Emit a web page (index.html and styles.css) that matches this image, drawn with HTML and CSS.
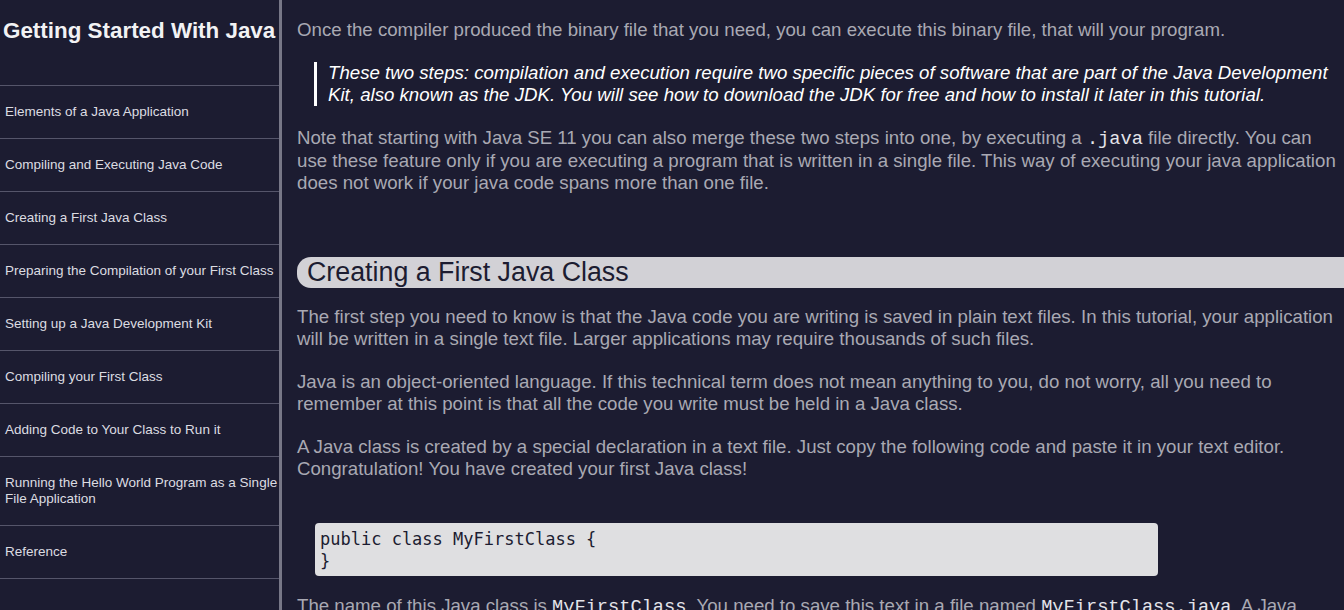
FILE: index.html
```html
<!DOCTYPE html>
<html lang="en">
<head>
<meta charset="utf-8">
<title>Getting Started With Java</title>
<link rel="stylesheet" href="styles.css">
</head>
<body>
<div class="layout">
  <aside class="sidebar">
    <div class="sidebar-title">Getting Started With Java</div>
    <nav class="toc">
      <a class="toc-item" href="#">Elements of a Java Application</a>
      <a class="toc-item" href="#">Compiling and Executing Java Code</a>
      <a class="toc-item" href="#">Creating a First Java Class</a>
      <a class="toc-item" href="#">Preparing the Compilation of your First Class</a>
      <a class="toc-item" href="#">Setting up a Java Development Kit</a>
      <a class="toc-item" href="#">Compiling your First Class</a>
      <a class="toc-item" href="#">Adding Code to Your Class to Run it</a>
      <a class="toc-item" href="#">Running the Hello World Program as a Single File Application</a>
      <a class="toc-item" href="#">Reference</a>
    </nav>
  </aside>
  <main class="content">
    <p class="text">Once the compiler produced the binary file that you need, you can execute this binary file, that will your program.</p>
    <blockquote class="quote">These two steps: compilation and execution require two specific pieces of software that are part of the Java Development Kit, also known as the JDK. You will see how to download the JDK for free and how to install it later in this tutorial.</blockquote>
    <p class="text">Note that starting with Java SE 11 you can also merge these two steps into one, by executing a <code class="inline-code">.java</code> file directly. You can use these feature only if you are executing a program that is written in a single file. This way of executing your java application does not work if your java code spans more than one file.</p>

    <h2 class="section-title">Creating a First Java Class</h2>
    <p class="text">The first step you need to know is that the Java code you are writing is saved in plain text files. In this tutorial, your application will be written in a single text file. Larger applications may require thousands of such files.</p>
    <p class="text">Java is an object-oriented language. If this technical term does not mean anything to you, do not worry, all you need to remember at this point is that all the code you write must be held in a Java class.</p>
    <p class="text">A Java class is created by a special declaration in a text file. Just copy the following code and paste it in your text editor. Congratulation! You have created your first Java class!</p>
    <pre class="code-block">public class MyFirstClass {
}</pre>
    <p class="text">The name of this Java class is <code class="inline-code">MyFirstClass</code>. You need to save this text in a file named <code class="inline-code">MyFirstClass.java</code>. A Java class must be saved in a file that has the same name as your class, with the extension .java.</p>
  </main>
</div>
</body>
</html>
```

FILE: styles.css
```css
html, body {
  margin: 0;
  padding: 0;
  height: 100%;
  overflow: hidden;
}

body {
  background: #1c1c31;
  font-family: "Liberation Sans", Arial, sans-serif;
}

.layout {
  display: flex;
  align-items: stretch;
  min-height: 100%;
}

.sidebar {
  flex: 0 0 279px;
  width: 279px;
  border-right: 3px solid #777787;
  display: flex;
  flex-direction: column;
}

.sidebar-title {
  box-sizing: border-box;
  height: 85px;
  padding: 18px 0 0 3px;
  font-size: 22.4px;
  font-weight: bold;
  color: #f2f2f4;
  white-space: nowrap;
}

.toc {
  display: flex;
  flex-direction: column;
}

.toc-item {
  display: block;
  border-top: 1px solid #55556a;
  padding: 18px 0 18px 5px;
  font-size: 13.5px;
  line-height: 16px;
  color: #dcdce2;
  text-decoration: none;
}

.toc-item:last-child {
  border-bottom: 1px solid #55556a;
}

.content {
  flex: 1 1 auto;
  min-width: 0;
  padding: 19px 0 0 15px;
}

.text {
  margin: 0 0 21px 0;
  font-size: 18.67px;
  line-height: 22px;
  color: #a9a9b3;
}

.inline-code {
  font-family: "Liberation Mono", "Courier New", monospace;
  font-size: 18.67px;
  color: #e4e4ea;
}

.quote {
  margin: 0 0 21px 17px;
  padding-left: 11px;
  border-left: 3px solid #ffffff;
  font-size: 18.67px;
  line-height: 22px;
  font-style: italic;
  color: #ffffff;
}

.section-title {
  margin: 63px 0 18px 0;
  padding: 0 0 0 10px;
  background: #d2d1d6;
  border-radius: 14px 0 0 14px;
  font-size: 26.8px;
  font-weight: normal;
  line-height: 31px;
  color: #1c1c31;
}

.code-block {
  width: 833px;
  margin: 43px 0 19px 18px;
  padding: 5px 5px 4px 5px;
  background: #dfdfe1;
  border-radius: 4px;
  font-family: "DejaVu Sans Mono", monospace;
  font-size: 17px;
  line-height: 22px;
  color: #1c1c31;
}
```
